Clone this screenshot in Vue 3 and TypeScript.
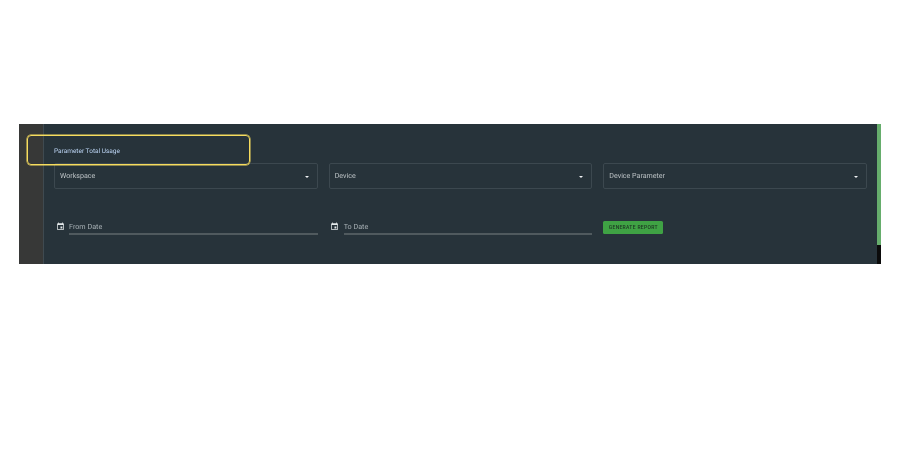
<script setup lang="ts">
const selects: string[] = ['Workspace', 'Device', 'Device Parameter']
const dates: string[] = ['From Date', 'To Date']
</script>

<template>
  <div class="page">
    <div class="screen">
      <aside class="rail"></aside>
      <main class="content">
        <h1 class="title">Parameter Total Usage</h1>
        <div class="grid">
          <div v-for="s in selects" :key="s" class="select">
            <span>{{ s }}</span>
            <i class="caret"></i>
          </div>
        </div>
        <div class="grid dates">
          <div v-for="d in dates" :key="d" class="date">
            <svg class="cal" viewBox="0 0 24 24" width="9" height="9">
              <path fill="#e4e9ea" d="M19 3h-1V1h-2v2H8V1H6v2H5a2 2 0 0 0-2 2v14a2 2 0 0 0 2 2h14a2 2 0 0 0 2-2V5a2 2 0 0 0-2-2zm0 16H5V8h14v11zM12 12h5v5h-5z" />
            </svg>
            <div class="line">{{ d }}</div>
          </div>
          <div class="action">
            <button class="btn" type="button">GENERATE REPORT</button>
          </div>
        </div>
      </main>
      <div class="scroll"><div class="thumb"></div></div>
      <div class="highlight"></div>
    </div>
  </div>
</template>

<style>
html, body { margin: 0; background: #fff; }
</style>

<style scoped>
.page {
  width: 900px;
  height: 450px;
  padding: 124px 0 0 19px;
  box-sizing: border-box;
  overflow: hidden;
  font-family: Roboto, "Liberation Sans", sans-serif;
  text-rendering: geometricPrecision;
}
.screen {
  position: relative;
  display: flex;
  width: 862px;
  height: 140px;
  background: #27333a;
  filter: blur(0.35px);
}
.rail {
  width: 24px;
  flex: none;
  background: #373837;
  border-right: 1px solid #3f4a50;
}
.content {
  flex: 1;
  min-width: 0;
  padding: 24px 10px 0 10px;
  box-sizing: border-box;
}
.title {
  margin: 0;
  height: 15px;
  font-size: 6.5px;
  line-height: 7px;
  font-weight: 400;
  color: #bdd5f5;
}
.grid {
  display: grid;
  grid-template-columns: repeat(3, 1fr);
  column-gap: 11px;
}
.select {
  height: 25.5px;
  box-sizing: border-box;
  display: flex;
  align-items: center;
  justify-content: space-between;
  padding: 0 8px 0 5px;
  border: 1px solid #3c484f;
  border-radius: 2px;
  font-size: 7.1px;
  color: #bcc2c5;
}
.caret {
  width: 0;
  height: 0;
  margin-top: 2px;
  border-left: 2.5px solid transparent;
  border-right: 2.5px solid transparent;
  border-top: 2.5px solid #f0f2f3;
}
.dates {
  margin-top: 32.5px;
}
.date {
  display: flex;
  align-items: flex-start;
}
.cal {
  flex: none;
  margin: 0.5px 4.5px 0 1.5px;
}
.line {
  flex: 1;
  height: 13.5px;
  line-height: 11px;
  font-size: 7.2px;
  color: #a8b1b5;
  box-sizing: border-box;
  border-bottom: 2px solid #505a5e;
}
.action {
  display: flex;
  align-items: flex-start;
}
.btn {
  width: 60px;
  height: 13px;
  padding: 0;
  border: 0;
  border-radius: 1.5px;
  background: #3fa244;
  color: #1c3322;
  font: 500 5px/13px Roboto, "Liberation Sans", sans-serif;
  letter-spacing: 0.3px;
}
.scroll {
  width: 4px;
  flex: none;
  background: #0b0b0b;
}
.thumb {
  height: 121px;
  background: #66ad6c;
}
.highlight {
  position: absolute;
  left: 8px;
  top: 11px;
  width: 223px;
  height: 30px;
  box-sizing: border-box;
  border: 1px solid #f6dc5e;
  box-shadow: 0 0 0 0.5px #f6dc5e;
  border-radius: 4px;
}
</style>
